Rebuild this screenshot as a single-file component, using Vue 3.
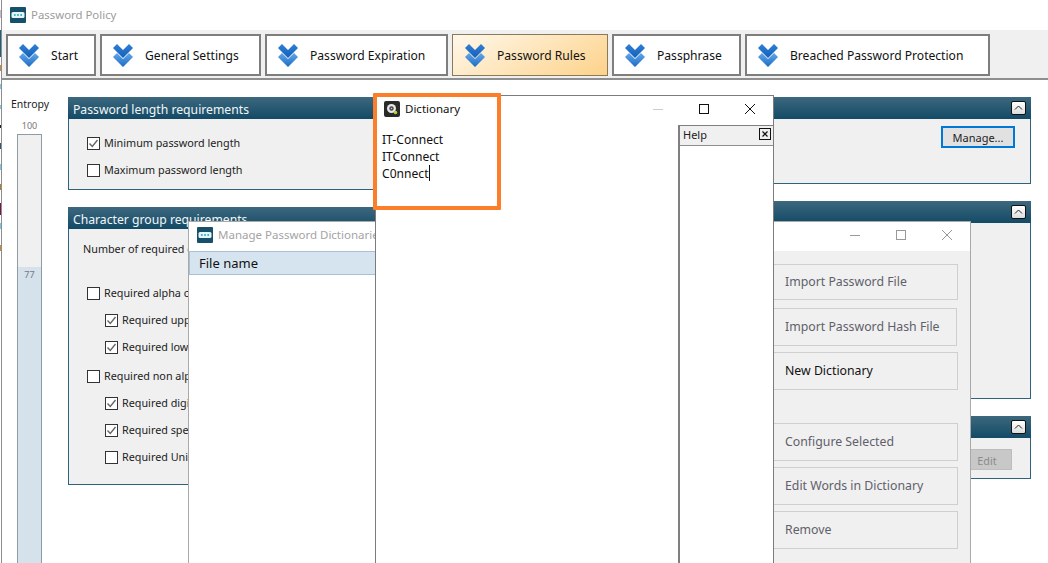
<script setup>
const tabs = [
  { label: 'Start', width: 90 },
  { label: 'General Settings', width: 161 },
  { label: 'Password Expiration', width: 183 },
  { label: 'Password Rules', width: 156, active: true },
  { label: 'Passphrase', width: 129 },
  { label: 'Breached Password Protection', width: 245 }
]
const lengthOptions = [
  { label: 'Minimum password length', checked: true },
  { label: 'Maximum password length', checked: false }
]
const groupOptions = [
  { label: 'Required alpha characters', checked: false, sub: false },
  { label: 'Required uppercase', checked: true, sub: true },
  { label: 'Required lowercase', checked: true, sub: true },
  { label: 'Required non alpha characters', checked: false, sub: false, wide: true },
  { label: 'Required digits', checked: true, sub: true },
  { label: 'Required special', checked: true, sub: true },
  { label: 'Required Unicode', checked: false, sub: true }
]
const topActions = [
  { label: 'Import Password File', h: 36, mb: 8 },
  { label: 'Import Password Hash File', h: 38, mb: 6, narrow: true },
  { label: 'New Dictionary', h: 38, mb: 33, on: true }
]
const bottomActions = [
  { label: 'Configure Selected' },
  { label: 'Edit Words in Dictionary' },
  { label: 'Remove' }
]
const edgeBits = [
  { top: 10, h: 8, c: '#c9b8c8' },
  { top: 30, h: 27, c: '#1f5f7c' },
  { top: 65, h: 6, c: '#c98a3a' },
  { top: 84, h: 5, c: '#7cc4e8' },
  { top: 105, h: 4, c: '#7cc4e8' },
  { top: 125, h: 3, c: '#222' },
  { top: 143, h: 6, c: '#2a5a78' },
  { top: 164, h: 6, c: '#7cc4e8' },
  { top: 184, h: 6, c: '#b08030' },
  { top: 203, h: 12, c: '#7a1450' },
  { top: 223, h: 6, c: '#7cc4e8' },
  { top: 245, h: 6, c: '#c98a3a' }
]
</script>

<template>
  <div class="screen">
    <div class="edge">
      <i v-for="b in edgeBits" :key="b.top" :style="{ top: b.top + 'px', height: b.h + 'px', background: b.c }"></i>
    </div>
    <div class="main">
      <div class="titlebar">
        <svg class="logo" viewBox="0 0 16 16"><rect width="16" height="16" rx="1" fill="#17506b"/><rect x="1.5" y="5" width="13" height="6" rx="1.5" fill="#e8f4f6"/><circle cx="4.8" cy="8" r="1" fill="#1fb5bd"/><circle cx="8" cy="8" r="1" fill="#1fb5bd"/><circle cx="11.2" cy="8" r="1" fill="#1fb5bd"/></svg>
        <span>Password Policy</span>
      </div>
      <div class="toolbar">
        <button v-for="t in tabs" :key="t.label" class="tab" :class="{ active: t.active }" :style="{ width: t.width + 'px' }">
          <svg class="chev" viewBox="0 0 20 24">
            <defs>
              <linearGradient id="chevA" x1="0" y1="0" x2="0" y2="1"><stop offset="0" stop-color="#2f7fd6"/><stop offset="1" stop-color="#1560b8"/></linearGradient>
              <linearGradient id="chevB" x1="0" y1="0" x2="0" y2="1"><stop offset="0" stop-color="#63a8ea"/><stop offset="1" stop-color="#1a6cc6"/></linearGradient>
            </defs>
            <polygon points="0,5 4,1 10,7 16,1 20,5 10,15" fill="url(#chevA)"/>
            <polygon points="0,14 4,10 10,16 16,10 20,14 10,24" fill="url(#chevB)"/>
          </svg>
          <span>{{ t.label }}</span>
        </button>
      </div>
      <div class="body">
        <div class="entropy">
          <div class="entropy-title">Entropy</div>
          <div class="entropy-max">100</div>
          <div class="meter">
            <div class="meter-empty"></div>
            <div class="meter-fill">77</div>
          </div>
        </div>
        <div class="panels">
          <div class="col left-col">
            <section class="panel length">
              <header class="panel-head"><span>Password length requirements</span></header>
              <div class="panel-body length-body">
                <label v-for="o in lengthOptions" :key="o.label" class="opt">
                  <span class="box"><svg v-if="o.checked" viewBox="0 0 11 11"><path d="M1.500 5.500 4.300 8.500 9.500 2" fill="none" stroke="#666" stroke-width="1.400"/></svg></span>{{ o.label }}
                </label>
              </div>
            </section>
            <section class="panel groups">
              <header class="panel-head"><span>Character group requirements</span></header>
              <div class="panel-body group-body">
                <div class="count-label">Number of required character groups</div>
                <label v-for="o in groupOptions" :key="o.label" class="opt" :class="{ sub: o.sub, wide: o.wide }">
                  <span class="box"><svg v-if="o.checked" viewBox="0 0 11 11"><path d="M1.500 5.500 4.300 8.500 9.500 2" fill="none" stroke="#666" stroke-width="1.400"/></svg></span>{{ o.label }}
                </label>
              </div>
            </section>
          </div>
          <div class="col right-col">
            <section class="panel dict-panel">
              <header class="panel-head"><span></span><i class="collapse"><svg viewBox="0 0 13 12"><path d="M3 7.500 6.500 4 10 7.500" fill="none" stroke="#222"/></svg></i></header>
              <div class="panel-body manage-body"><button class="manage">Manage...</button></div>
            </section>
            <section class="panel tall">
              <header class="panel-head"><span></span><i class="collapse"><svg viewBox="0 0 13 12"><path d="M3 7.500 6.500 4 10 7.500" fill="none" stroke="#222"/></svg></i></header>
              <div class="panel-body"></div>
            </section>
            <section class="panel short">
              <header class="panel-head"><span></span><i class="collapse"><svg viewBox="0 0 13 12"><path d="M3 7.500 6.500 4 10 7.500" fill="none" stroke="#222"/></svg></i></header>
              <div class="panel-body edit-body"><button class="edit">Edit</button></div>
            </section>
          </div>
        </div>
      </div>
    </div>

    <div class="window manage-win">
      <div class="win-title">
        <svg class="logo" viewBox="0 0 16 16"><rect width="16" height="16" rx="1" fill="#17506b"/><rect x="1.500" y="5" width="13" height="6" rx="1.500" fill="#e8f4f6"/><circle cx="4.800" cy="8" r="1" fill="#1fb5bd"/><circle cx="8" cy="8" r="1" fill="#1fb5bd"/><circle cx="11.200" cy="8" r="1" fill="#1fb5bd"/></svg>
        <span>Manage Password Dictionaries</span>
        <div class="controls faded">
          <svg viewBox="0 0 12 12"><path d="M1 6.500H11" stroke="#999"/></svg>
          <svg viewBox="0 0 12 12"><rect x="1.500" y="1.500" width="9" height="9" fill="none" stroke="#999"/></svg>
          <svg viewBox="0 0 12 12"><path d="M1 1 11 11M11 1 1 11" stroke="#999"/></svg>
        </div>
      </div>
      <div class="manage-content">
        <div class="list">
          <div class="list-head">File name</div>
        </div>
        <div class="actions">
          <button v-for="a in topActions" :key="a.label" class="action" :class="{ on: a.on, narrow: a.narrow }" :style="{ height: a.h + 'px', marginBottom: a.mb + 'px' }">{{ a.label }}</button>
          <button v-for="a in bottomActions" :key="a.label" class="action low">{{ a.label }}</button>
        </div>
      </div>
    </div>

    <div class="window dict-win">
      <div class="win-title dict-title">
        <svg class="dict-icon" viewBox="0 0 16 16"><rect width="16" height="16" rx="2" fill="#2a2a2a"/><circle cx="7.500" cy="7.500" r="4.500" fill="#e8e8e8"/><circle cx="7.500" cy="7.500" r="2.200" fill="#444"/><circle cx="7.500" cy="7.500" r="0.800" fill="#ccc"/><circle cx="11.500" cy="11.500" r="1.800" fill="#b5d335"/></svg>
        <span>Dictionary</span>
        <div class="controls">
          <svg viewBox="0 0 12 12"><path d="M1 6.500H11" stroke="#ccc"/></svg>
          <svg viewBox="0 0 12 12"><rect x="1.500" y="1.500" width="9" height="9" fill="none" stroke="#111"/></svg>
          <svg viewBox="0 0 12 12"><path d="M1 1 11 11M11 1 1 11" stroke="#111"/></svg>
        </div>
      </div>
      <div class="dict-content">
        <div class="editor">IT-Connect<br>ITConnect<br>C0nnect<span class="caret"></span></div>
        <aside class="help">
          <div class="help-head"><span>Help</span><i class="help-x"><svg viewBox="0 0 10 10"><path d="M2.500 2.500 7.500 7.500M7.500 2.500 2.500 7.500" stroke="#111" stroke-width="1.200"/></svg></i></div>
        </aside>
      </div>
    </div>

    <div class="highlight"></div>
  </div>
</template>

<style>
html, body { margin: 0; overflow: hidden; background: #fff; }
</style>

<style scoped>
.screen {
  position: relative;
  width: 1048px;
  height: 563px;
  overflow: hidden;
  background: #fff;
  font-family: "Noto Sans", "Liberation Sans", sans-serif;
  font-size: 11.500px;
  color: #222;
}
button { font: inherit; }
.edge { position: absolute; left: 0; top: 0; width: 1px; height: 260px; }
.edge i { position: absolute; left: 0; width: 1px; display: block; }
.main {
  height: 563px;
  margin-left: 1px;
  border-left: 1px solid #8d8d8d;
  display: flex;
  flex-direction: column;
}
.titlebar {
  height: 30px;
  box-sizing: border-box;
  padding: 0 0 1px 8px;
  display: flex;
  align-items: center;
  gap: 5px;
  color: #9c9c9c;
  font-size: 11.400px;
}
.logo { width: 16px; height: 16px; flex: none; }
.toolbar {
  height: 50px;
  box-sizing: border-box;
  background: #f0f0f0;
  border-bottom: 2px solid #8f8f8f;
  display: flex;
  gap: 4px;
  padding: 4px 0 0 4px;
}
.tab {
  height: 42px;
  box-sizing: border-box;
  border: 2px solid #7e7e7e;
  background: #fff;
  display: flex;
  align-items: center;
  gap: 12px;
  padding: 0 0 0 11px;
  color: #111;
  font-size: 12.100px;
  white-space: nowrap;
}
.tab.active { background: linear-gradient(150deg, #fff6e6 5%, #fdd28a 100%); border-color: #8a7a5c; border-width: 1px; padding-left: 12px; }
.chev { width: 20px; height: 24px; flex: none; }
.body { flex: 1; display: flex; min-height: 0; }
.entropy { width: 66px; flex: none; text-align: center; }
.entropy-title { margin-top: 17px; width: 56px; line-height: 14px; font-size: 10.500px; color: #222; }
.entropy-max { margin-top: 9px; width: 55px; line-height: 12px; font-size: 9px; color: #777; }
.meter {
  margin: 2px 0 0 15px;
  width: 25px;
  height: 440px;
  border: 1px solid #8e9ca6;
  box-sizing: border-box;
  display: flex;
  flex-direction: column;
}
.meter-empty { height: 132px; background: #f0f0f0; }
.meter-fill { flex: 1; background: #d5e2ec; font-size: 9px; line-height: 14px; color: #778; padding-top: 1px; }
.panels { width: 963px; padding-top: 17px; display: flex; gap: 10px; }
.col { display: flex; flex-direction: column; gap: 17px; }
.left-col { width: 452px; flex: none; }
.right-col { flex: 1; }
.panel { border: 1px solid #2f627d; border-top: 0; background: #f0f0f0; box-sizing: border-box; flex: none; }
.panel-head {
  height: 22px;
  box-sizing: border-box;
  margin: 0 -1px;
  padding: 2px 5px 0;
  display: flex;
  align-items: center;
  justify-content: space-between;
  background: linear-gradient(#3d687e, #134a66);
  color: #f2f6f8;
  font-size: 12.200px;
}
.collapse {
  width: 15px;
  height: 14px;
  box-sizing: border-box;
  border: 1px solid #111;
  border-radius: 2px;
  background: linear-gradient(#fff, #ddd);
  display: block;
  margin-top: -2px;
}
.collapse svg { display: block; width: 13px; height: 12px; }
.panel-body { height: calc(100% - 22px); box-sizing: border-box; }
.length { height: 93px; }
.length-body { padding: 16px 0 0 18px; }
.opt { display: flex; align-items: center; gap: 4px; height: 14px; white-space: nowrap; font-size: 10.800px; color: #222; }
.opt + .opt { margin-top: 13px; }
.opt.sub { margin-left: 18px; }
.opt.wide { margin-top: 15px; }
.box {
  width: 13px;
  height: 13px;
  box-sizing: border-box;
  border: 1px solid #333;
  background: #fff;
  flex: none;
  margin-top: 2px;
}
.box svg { display: block; width: 11px; height: 11px; }
.groups { height: 278px; }
.group-body { padding: 12px 0 0 18px; }
.count-label { font-size: 10.800px; line-height: 16px; margin: 0 0 28px -4px; }
.dict-panel { height: 87px; }
.manage-body { display: flex; justify-content: flex-end; padding: 7px 15px 0 0; }
.manage {
  width: 74px;
  height: 22px;
  border: 2px solid #0078d7;
  background: #e1e1e1;
  color: #222;
  font-size: 11px;
  padding: 0;
}
.tall { height: 198px; }
.short { height: 63px; }
.edit-body { display: flex; justify-content: flex-end; padding: 11px 18px 0 0; }
.edit {
  width: 50px;
  height: 21px;
  border: 1px solid #bdbdbd;
  background: #c8c8c8;
  color: #8b8b8b;
  font-size: 10.800px;
  padding: 1px 0 0;
}
.window {
  position: absolute;
  background: #fff;
  box-sizing: border-box;
}
.manage-win {
  left: 188px;
  top: 221px;
  width: 783px;
  height: 342px;
  border: 1px solid #a9a9a9;
  border-bottom: 0;
}
.win-title { height: 29px; box-sizing: border-box; padding: 0 0 4px 8px; display: flex; align-items: center; gap: 5px; color: #a4a4a4; font-size: 11.500px; }
.controls { margin-left: auto; display: flex; gap: 34px; padding-right: 17px; }
.controls svg { width: 12px; height: 12px; display: block; }
.manage-content { display: flex; height: 312px; }
.list { width: 584px; flex: none; }
.list-head {
  height: 24px;
  box-sizing: border-box;
  border-top: 1px solid #a9bfd6;
  border-bottom: 1px solid #a9bfd6;
  border-left: 1px solid #a9bfd6;
  background: #d6e4f0;
  color: #111;
  padding-left: 9px;
  line-height: 23px;
  font-size: 13px;
}
.actions { flex: 1; background: #f0f0f0; padding: 13px 12px 0 0; box-sizing: border-box; }
.action {
  display: block;
  position: relative;
  width: 100%;
  height: 38px;
  box-sizing: border-box;
  border: 1px solid #cfcfcf;
  border-left: 0;
  background: #f0f0f0;
  text-align: left;
  padding: 0 0 2px 12px;
  color: #60606a;
  font-size: 12.300px;
}
.action::before {
  content: "";
  position: absolute;
  left: 0;
  top: 50%;
  width: 1px;
  height: 3px;
  margin-top: -2px;
  background: #a8a8a8;
}
.action.narrow { width: calc(100% - 1px); }
.action.on { color: #111; }
.action.low { margin-bottom: 6px; }
.dict-win {
  left: 375px;
  top: 95px;
  width: 399px;
  height: 468px;
  border: 1px solid #7c7c7c;
  border-bottom: 0;
}
.dict-title { color: #111; }
.dict-icon { width: 16px; height: 16px; flex: none; }
.dict-content { display: flex; height: 438px; }
.editor { flex: 1; padding: 6px 0 0 6px; font-size: 12.100px; line-height: 17px; color: #111; }
.caret { display: inline-block; width: 1px; height: 16px; background: #111; vertical-align: -3px; }
.help { width: 95px; border-left: 2px solid #7f7f7f; border-top: 1px solid #7f7f7f; box-sizing: border-box; }
.help-head {
  height: 20px;
  box-sizing: border-box;
  background: #f0f0f0;
  border-bottom: 1px solid #8f8f8f;
  display: flex;
  justify-content: space-between;
  padding: 2px 2px 0 3px;
  font-size: 11px;
  line-height: 14px;
}
.help-x { width: 12px; height: 12px; box-sizing: border-box; border: 1px solid #111; display: block; }
.help-x svg { display: block; width: 10px; height: 10px; }
.highlight {
  position: absolute;
  left: 373px;
  top: 93px;
  width: 128px;
  height: 117px;
  box-sizing: border-box;
  border: 4px solid #fd7e2a;
  border-radius: 1px;
}
</style>
